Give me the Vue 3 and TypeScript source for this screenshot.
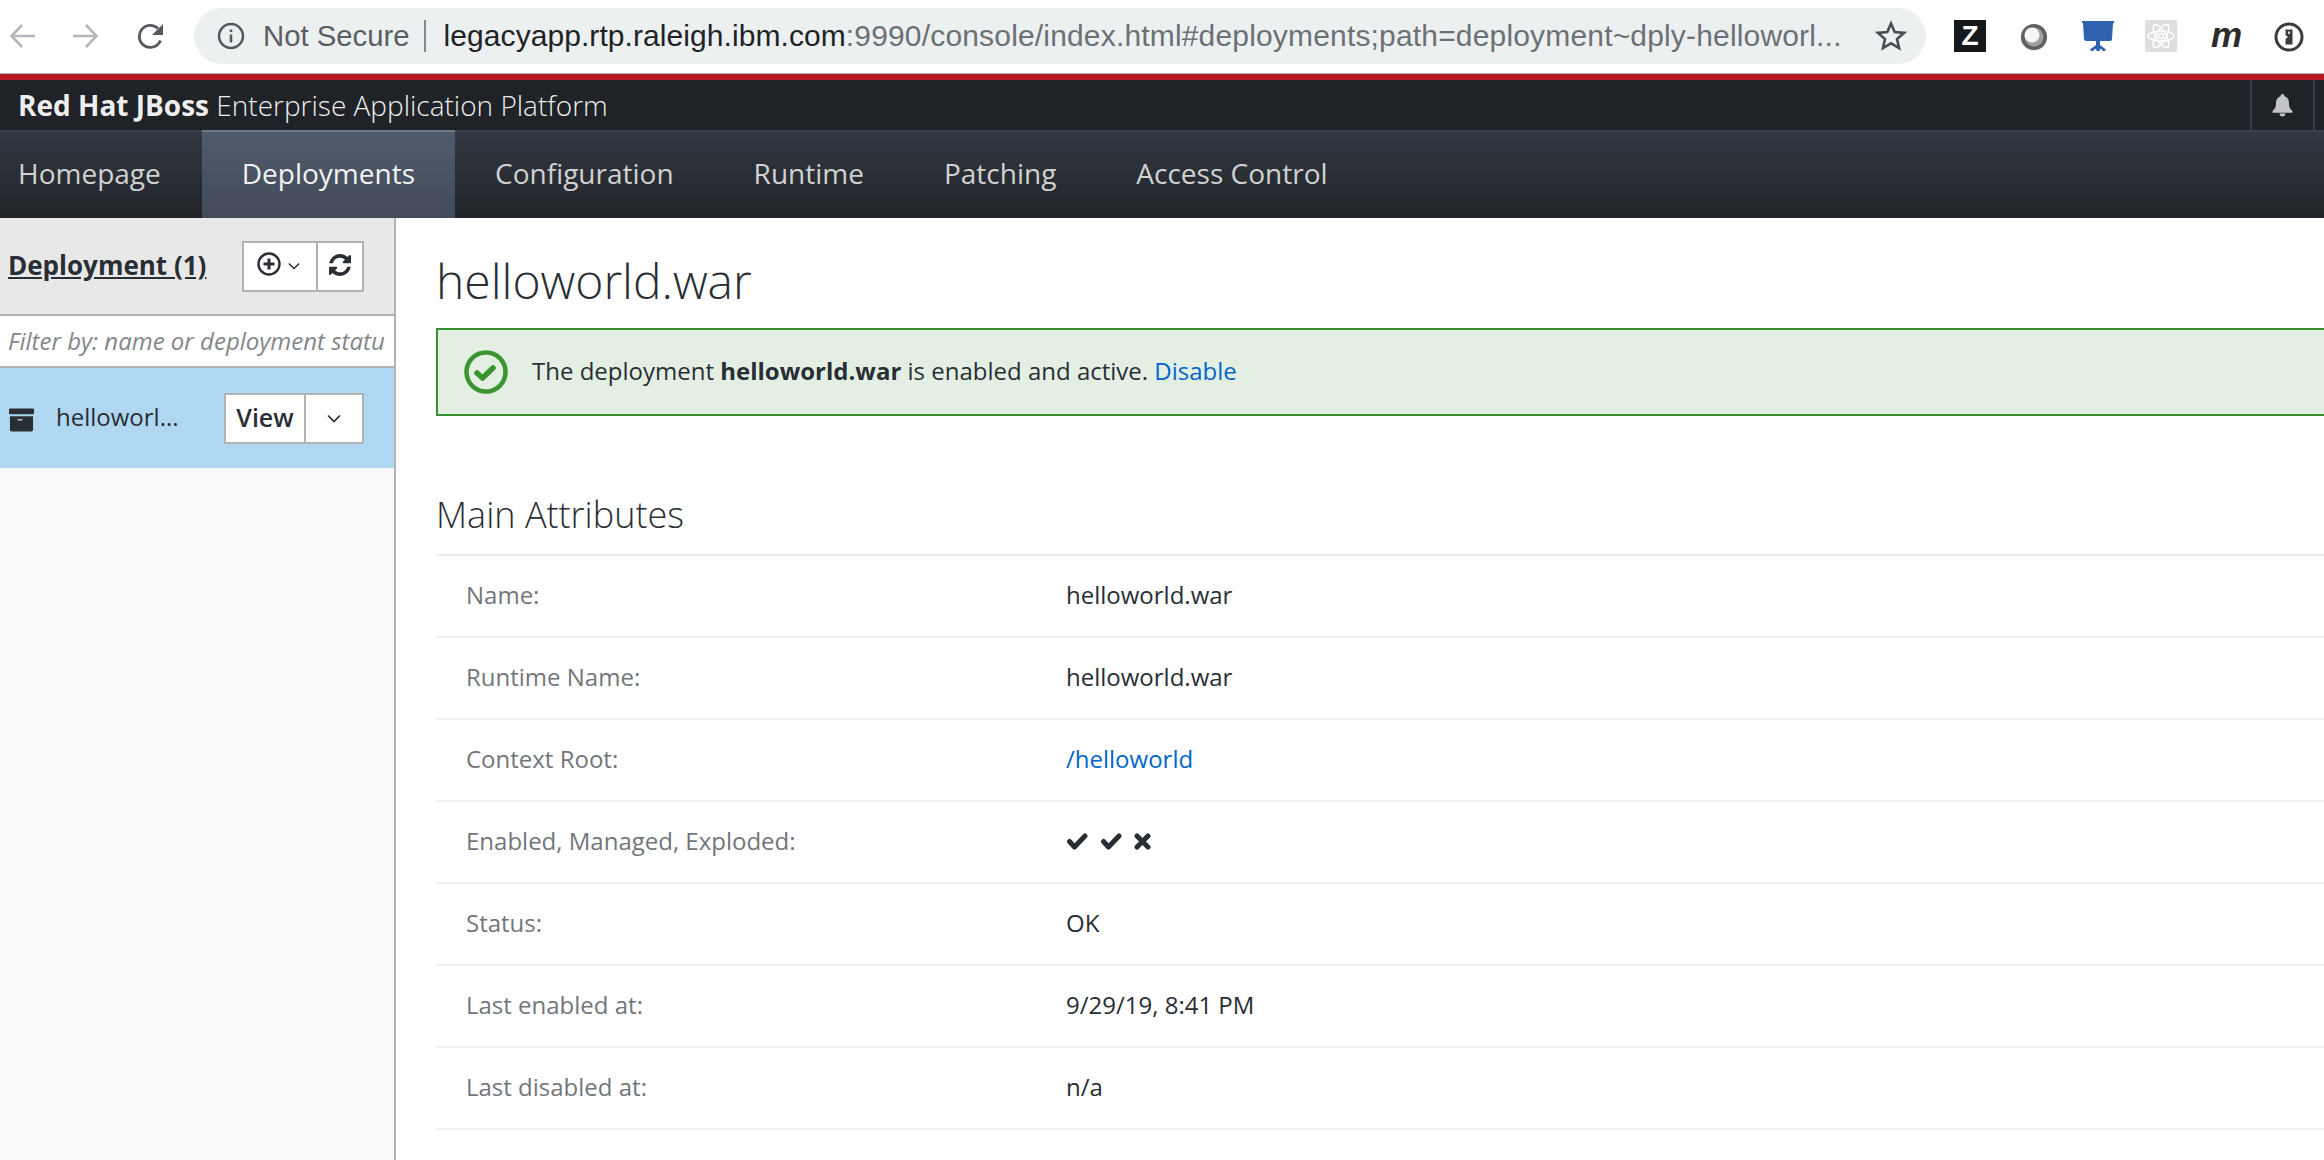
<script setup lang="ts">
// JBoss EAP console, deployment detail view inside a browser window
const tabs = ['Homepage', 'Deployments', 'Configuration', 'Runtime', 'Patching', 'Access Control']
const activeTab = 'Deployments'

interface Attr {
  label: string
  value?: string
  link?: boolean
  flags?: boolean[]
}

const attrs: Attr[] = [
  { label: 'Name:', value: 'helloworld.war' },
  { label: 'Runtime Name:', value: 'helloworld.war' },
  { label: 'Context Root:', value: '/helloworld', link: true },
  { label: 'Enabled, Managed, Exploded:', flags: [true, true, false] },
  { label: 'Status:', value: 'OK' },
  { label: 'Last enabled at:', value: '9/29/19, 8:41 PM' },
  { label: 'Last disabled at:', value: 'n/a' },
]

const refreshPath =
  'M1639 1056q0 5-1 7-64 268-268 434.5t-478 166.5q-146 0-282.5-55t-243.5-157l-129 129q-19 19-45 19t-45-19-19-45v-448q0-26 19-45t45-19h448q26 0 45 19t19 45-19 45l-137 137q71 66 161 102t187 36q134 0 250-65t186-179q11-17 53-117 8-23 30-23h192q13 0 22.5 9.5t9.5 22.5zm25-800v448q0 26-19 45t-45 19h-448q-26 0-45-19t-19-45 19-45l138-138q-148-137-349-137-134 0-250 65t-186 179q-11 17-53 117-8 23-30 23h-199q-13 0-22.5-9.5t-9.5-22.5v-7q65-268 270-434.5t480-166.5q146 0 284 55.5t245 156.5l130-129q19-19 45-19t45 19 19 45z'
</script>

<template>
  <div class="window">
    <!-- browser toolbar -->
    <div class="chrome">
      <svg class="nav-ico back" viewBox="0 0 26 26" fill="none" stroke="#b4b7ba" stroke-width="2.6">
        <path d="M26 13H3M13 2 2.5 13 13 24" />
      </svg>
      <svg class="nav-ico fwd" viewBox="0 0 26 26" fill="none" stroke="#b4b7ba" stroke-width="2.6">
        <path d="M0 13h23M13 2l10.5 11L13 24" />
      </svg>
      <svg class="nav-ico reload" viewBox="0 0 28 26" fill="none">
        <path d="M23.5 17.5A11 11 0 1 1 21 5.5" stroke="#55595e" stroke-width="2.8" />
        <path d="M26 1v11H15z" fill="#55595e" />
      </svg>
      <div class="omnibox">
        <svg class="info" viewBox="0 0 28 28" fill="none">
          <circle cx="14" cy="14" r="12" stroke="#55595e" stroke-width="2.5" />
          <path d="M14 12.5v8M14 7.5v2.6" stroke="#55595e" stroke-width="2.5" />
        </svg>
        <span class="secure">Not Secure</span>
        <span class="omni-div"></span>
        <span class="url"><b>legacyapp.rtp.raleigh.ibm.com</b>:9990/console/index.html#deployments;path=deployment~dply-helloworl...</span>
        <svg class="star" viewBox="0 0 32 32" fill="none">
          <path d="M16 3.5l3.7 8.6 9.3.8-7 6.1 2.1 9.1-8.1-4.8-8.1 4.8 2.1-9.1-7-6.1 9.3-.8z" stroke="#4a4e53" stroke-width="2.6" />
        </svg>
      </div>
      <div class="extensions">
        <span class="ext-z">Z</span>
        <svg class="ext-ring" viewBox="0 0 28 28">
          <circle cx="14" cy="14.5" r="13.5" fill="#e4e4e4" />
          <circle cx="14" cy="14" r="13" fill="#606060" />
          <circle cx="14" cy="14" r="9.5" fill="#a0a0a0" />
          <circle cx="12" cy="12" r="7.5" fill="#f6f6f6" />
        </svg>
        <svg class="ext-board" viewBox="0 0 32 31">
          <path d="M0 0h32v2h-1l-1 16a2 2 0 0 1-2 2H4a2 2 0 0 1-2-2L1 2H0z" fill="#2f61b1" />
          <path d="M14 20h4v4l6 4.5-2 2-4-3-.5 2.500h-3L14 27.500l-4 3-2-2 6-4.500z" fill="#2f61b1" />
        </svg>
        <svg class="ext-react" viewBox="0 0 32 32">
          <rect width="32" height="32" rx="2" fill="#dedede" />
          <g fill="none" stroke="#fff" stroke-width="1.5">
            <ellipse cx="16" cy="16" rx="13" ry="5" />
            <ellipse cx="16" cy="16" rx="13" ry="5" transform="rotate(60 16 16)" />
            <ellipse cx="16" cy="16" rx="13" ry="5" transform="rotate(120 16 16)" />
            <circle cx="16" cy="16" r="2.5" />
          </g>
        </svg>
        <span class="ext-m">m</span>
        <svg class="ext-one" viewBox="0 0 30 30" fill="none">
          <circle cx="15" cy="15" r="13" stroke="#3b3b3b" stroke-width="3" />
          <path d="M11.5 7.500h7v15h-7v-5.500l2.500-2-2.500-2z" fill="#3b3b3b" />
          <rect x="14" y="9.500" width="2" height="2.500" fill="#d8d8d8" />
        </svg>
      </div>
    </div>

    <!-- product header -->
    <header class="brand-bar">
      <div class="brand"><b>Red Hat JBoss</b> Enterprise Application Platform</div>
      <div class="bell-cell">
        <svg viewBox="0 0 22 24" class="bell">
          <path d="M11 0a2 2 0 0 1 2 2.300c3.400.9 4.800 3.600 4.800 7.200 0 4.600 1.200 6.300 3.700 8.500v1.500H.5V18c2.500-2.200 3.700-3.900 3.700-8.500 0-3.600 1.400-6.300 4.800-7.200A2 2 0 0 1 11 0zM8 20.500h6a3 3 0 0 1-6 0z" fill="#c4c5c6" />
        </svg>
      </div>
      <div class="bell-rest"></div>
    </header>

    <nav class="tabs">
      <a
        v-for="tab in tabs"
        :key="tab"
        class="tab"
        :class="{ active: tab === activeTab }"
      >{{ tab }}</a>
    </nav>

    <div class="body">
      <aside class="side">
        <div class="side-head">
          <span class="side-title">Deployment (1)</span>
          <div class="btn-group">
            <button class="btn add">
              <svg class="plus" viewBox="0 0 24 24" fill="none" stroke="#292e34">
                <circle cx="12" cy="12" r="10.500" stroke-width="2.400" />
                <path d="M12 6.500v11M6.500 12h11" stroke-width="3" />
              </svg>
              <svg class="chev" viewBox="0 0 14 9" fill="none" stroke="#292e34" stroke-width="1.700">
                <path d="M1 1.500l6 6 6-6" />
              </svg>
            </button>
            <button class="btn refresh">
              <svg viewBox="128 128 1536 1536" class="refresh-ico"><path :d="refreshPath" fill="#292e34" /></svg>
            </button>
          </div>
        </div>
        <div class="filter">Filter by: name or deployment statu</div>
        <div class="item">
          <svg class="archive" viewBox="0 0 26 24">
            <rect x="0" y="0" width="26" height="6" rx="1" fill="#292e34" />
            <path d="M1 8h24v14a2 2 0 0 1-2 2H3a2 2 0 0 1-2-2z" fill="#292e34" />
            <rect x="9" y="11" width="5" height="1.600" fill="#c0c4c8" />
          </svg>
          <span class="item-name">helloworl...</span>
          <div class="btn-group">
            <button class="btn view">View</button>
            <button class="btn more">
              <svg class="chev" viewBox="0 0 14 9" fill="none" stroke="#292e34" stroke-width="1.700">
                <path d="M1 1.500l6 6 6-6" />
              </svg>
            </button>
          </div>
        </div>
      </aside>

      <main class="main">
        <h1 class="title">helloworld.war</h1>
        <div class="alert">
          <svg class="ok" viewBox="0 0 44 44" fill="none" stroke="#3a942f">
            <circle cx="22" cy="22" r="19.500" stroke-width="4.500" />
            <path d="M13 23l5.500 5L29 18" stroke-width="5.500" stroke-linecap="round" stroke-linejoin="round" />
          </svg>
          <span class="alert-text">The deployment <b>helloworld.war</b> is enabled and active. <a class="link">Disable</a></span>
        </div>
        <h2 class="section">Main Attributes</h2>
        <div class="attrs">
          <div v-for="a in attrs" :key="a.label" class="row">
            <span class="label">{{ a.label }}</span>
            <span v-if="a.flags" class="flags">
              <template v-for="(on, i) in a.flags" :key="i">
                <svg v-if="on" class="flag" viewBox="0 0 22 17" fill="none" stroke="#292e34" stroke-width="5" stroke-linecap="round" stroke-linejoin="round">
                  <path d="M3.500 8.500l5 5.500L19 3" />
                </svg>
                <svg v-else class="flag cross" viewBox="0 0 17 17" fill="none" stroke="#292e34" stroke-width="5" stroke-linecap="round">
                  <path d="M3 3l11 11M14 3L3 14" />
                </svg>
              </template>
            </span>
            <a v-else-if="a.link" class="link value">{{ a.value }}</a>
            <span v-else class="value">{{ a.value }}</span>
          </div>
        </div>
      </main>
    </div>
  </div>
</template>

<style>
html,
body {
  margin: 0;
  background: #fff;
}
</style>

<style scoped>
.window {
  width: 2324px;
  height: 1160px;
  overflow: hidden;
  display: flex;
  flex-direction: column;
  font-family: "Open Sans", "Liberation Sans", sans-serif;
  color: #292e34;
}

/* browser toolbar */
.chrome {
  height: 73px;
  flex: none;
  display: flex;
  align-items: flex-start;
  background: #fff;
}
.nav-ico {
  flex: none;
  margin-top: 23px;
  width: 26px;
  height: 26px;
}
.back { margin-left: 9px; }
.fwd { margin-left: 38px; }
.reload { margin-left: 38px; width: 28px; }
.omnibox {
  flex: none;
  margin: 8px 0 0 29px;
  width: 1732px;
  height: 56px;
  box-sizing: border-box;
  padding: 0 19px 0 23px;
  border-radius: 28px;
  background: #ecf0f1;
  display: flex;
  align-items: center;
  font-family: "Liberation Sans", Arial, sans-serif;
  font-size: 30px;
  white-space: nowrap;
}
.info { width: 28px; height: 28px; flex: none; }
.secure { margin-left: 18px; font-size: 29.3px; color: #5a5e63; }
.omni-div {
  width: 2px;
  height: 32px;
  margin: 0 18px 0 14px;
  background: #85898d;
  flex: none;
}
.url { color: #6c7175; flex: 1; overflow: hidden; letter-spacing: .17px; }
.url b { font-weight: 400; color: #202326; letter-spacing: .07px; }
.star { width: 32px; height: 32px; flex: none; }
.extensions {
  flex: none;
  margin: 20px 0 0 28px;
  display: flex;
  align-items: flex-start;
}
.ext-z {
  width: 32px;
  height: 32px;
  background: #16181c;
  color: #fff;
  font: 700 28px/32px "Liberation Sans", sans-serif;
  text-align: center;
}
.ext-ring { width: 28px; height: 28px; margin: 3px 0 0 34px; }
.ext-board { width: 32px; height: 31px; margin: 1px 0 0 34px; }
.ext-react { width: 32px; height: 32px; margin-left: 31px; }
.ext-m {
  margin-left: 34px;
  width: 30px;
  color: #2c2c2c;
  font: italic 700 35px/30px "Liberation Sans", sans-serif;
}
.ext-one { width: 30px; height: 30px; margin: 2px 0 0 33px; }

/* product header */
.brand-bar {
  height: 50px;
  flex: none;
  box-sizing: content-box;
  border-top: 1px solid #b4b4b4;
  display: flex;
  align-items: stretch;
  background: #1f2227;
  box-shadow: inset 0 6px 0 #b81924;
  padding-top: 6px;
}
.brand {
  flex: 1;
  padding-left: 18px;
  line-height: 50px;
  font-size: 28px;
  font-weight: 300;
  color: #eee;
  white-space: nowrap;
}
.brand b { font-weight: 700; }
.bell-cell {
  width: 61px;
  border-left: 2px solid #373d46;
  border-right: 2px solid #373d46;
  display: flex;
  align-items: center;
  justify-content: center;
}
.bell { width: 21px; height: 23px; }
.bell-rest { width: 9px; }

.tabs {
  height: 88px;
  flex: none;
  box-sizing: border-box;
  border-top: 2px solid #38404c;
  display: flex;
  background: linear-gradient(#323943, #212428);
}
.tab {
  padding: 0 40px;
  margin-top: -2px;
  line-height: 86px;
  font-size: 28px;
  color: #d1d1d1;
  white-space: nowrap;
}
.tab:first-child { padding-left: 18px; padding-right: 41px; }
.tab.active {
  color: #f2f2f2;
  border-top: 2px solid #6c7888;
  line-height: 82px;
  height: 86px;
  box-sizing: content-box;
  background: linear-gradient(#4f5b6c, #434a58);
}

.body {
  flex: 1;
  min-height: 0;
  display: flex;
}

/* sidebar */
.side {
  width: 396px;
  flex: none;
  box-sizing: border-box;
  border-right: 2px solid #b0b2b4;
  background: #fafafa;
}
.side-head {
  height: 98px;
  box-sizing: border-box;
  border-bottom: 2px solid #b0b2b4;
  background: #e8e8e8;
  padding: 23px 30px 0 8px;
  display: flex;
  align-items: flex-start;
  justify-content: space-between;
}
.side-title {
  margin-top: 7px;
  font-size: 26px;
  font-weight: 700;
  line-height: 34px;
  text-decoration: underline;
  white-space: nowrap;
}
.btn-group { display: flex; flex: none; }
.btn {
  height: 51px;
  padding: 0;
  margin: 0;
  background: #fff;
  border: 2px solid #b0b2b4;
  box-sizing: border-box;
  display: flex;
  align-items: center;
  justify-content: center;
  color: #292e34;
  font-family: inherit;
}
.btn + .btn { border-left: 0; }
.add { width: 76px; gap: 7px; padding-right: 3px; }
.refresh { width: 46px; }
.plus { width: 24px; height: 24px; margin-top: -6px; }
.chev { width: 14px; height: 9px; }
.add .chev { width: 12px; height: 8px; margin-top: -2px; }
.refresh-ico { width: 22px; height: 22px; margin-top: -4px; }
.filter {
  height: 52px;
  box-sizing: border-box;
  border-bottom: 2px solid #b0b2b4;
  background: #fff;
  padding: 0 0 0 8px;
  font-size: 24px;
  font-style: italic;
  line-height: 50px;
  color: #84878a;
  white-space: nowrap;
}
.item {
  height: 100px;
  box-sizing: border-box;
  background: #b0d7f1;
  padding: 0 30px 0 9px;
  display: flex;
  align-items: center;
}
.archive { width: 25px; height: 24px; flex: none; margin-top: 3px; }
.item-name {
  flex: 1;
  margin-left: 22px;
  padding-bottom: 3px;
  font-size: 24px;
  color: #292e34;
}
.view {
  width: 82px;
  padding-bottom: 2px;
  font-size: 25px;
  font-weight: 600;
}
.more { width: 58px; }

/* main content */
.main {
  flex: none;
  width: 2300px;
  padding-left: 40px;
  box-sizing: border-box;
}
.title {
  margin: 31px 0 0;
  font-size: 48px;
  font-weight: 300;
  line-height: 64px;
  color: #292e34;
}
.alert {
  margin-top: 15px;
  height: 88px;
  box-sizing: border-box;
  border: 2px solid #3a8f30;
  background: #e4efe4;
  padding-left: 26px;
  display: flex;
  align-items: center;
  gap: 24px;
  font-size: 24px;
  color: #292e34;
}
.alert-text { padding-bottom: 3px; }
.ok { width: 44px; height: 44px; flex: none; }
.link { color: #0066cc; }
.section {
  margin: 74px 0 0;
  padding-bottom: 14px;
  border-bottom: 2px solid #ededed;
  font-size: 36px;
  font-weight: 300;
  line-height: 50px;
}
.row {
  height: 82px;
  box-sizing: border-box;
  border-bottom: 2px solid #f1f1f1;
  display: flex;
  align-items: center;
  padding: 0 0 4px 30px;
  font-size: 24px;
}
.label {
  width: 600px;
  flex: none;
  color: #72767b;
}
.value { color: #292e34; }
a.value { color: #0066cc; }
.flags { display: flex; align-items: center; gap: 12px; padding-top: 2px; }
.flag { width: 22px; height: 17px; }
.flag.cross { width: 17px; }
</style>
